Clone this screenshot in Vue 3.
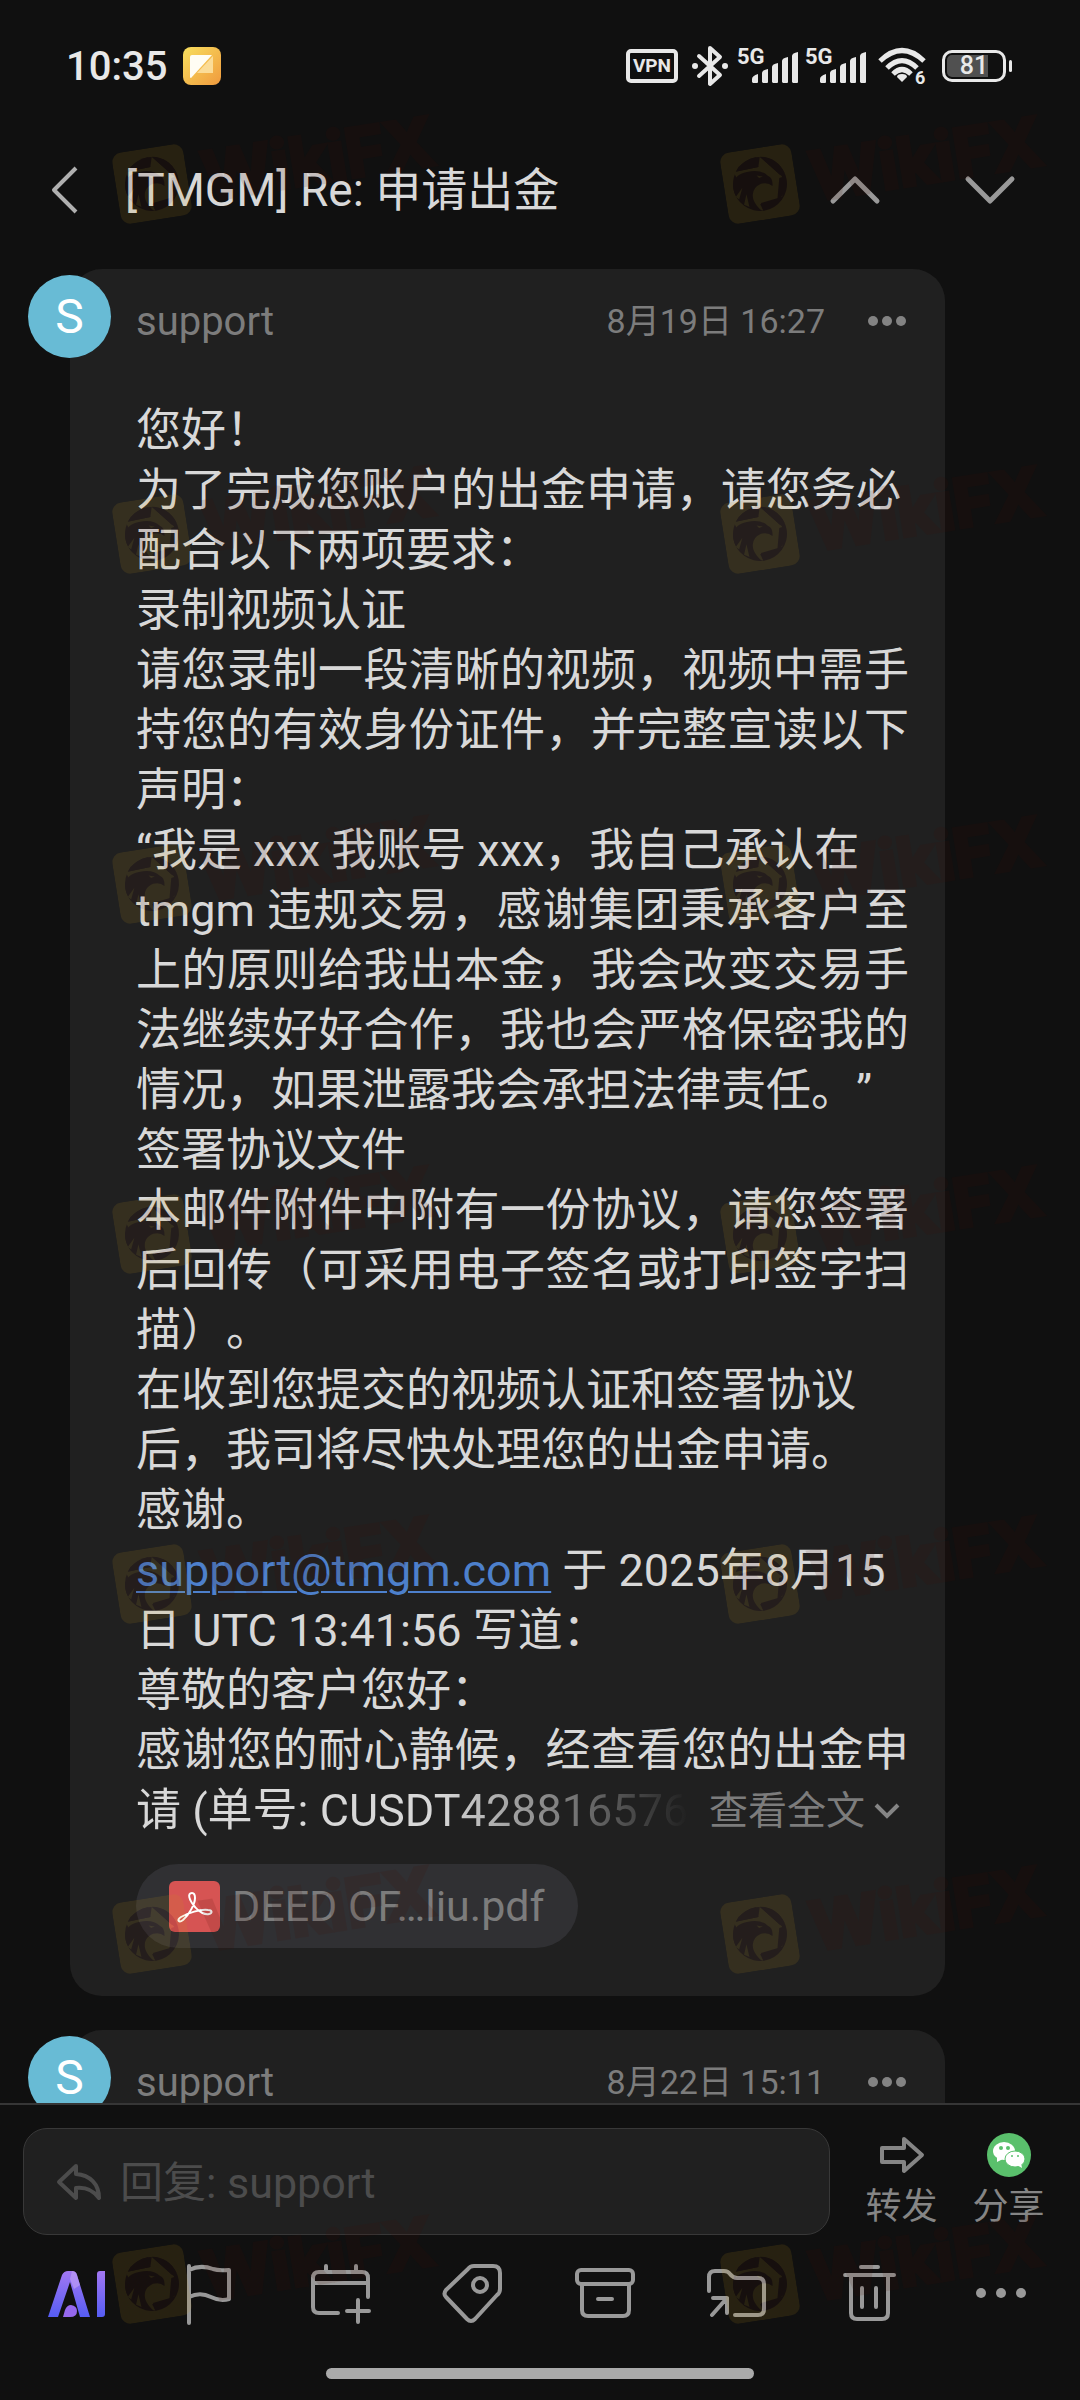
<script setup>
import { ref } from 'vue'

const reply = ref('')

const lines = [
  { text: '您好！' },
  { text: '为了完成您账户的出金申请，请您务必' },
  { text: '配合以下两项要求：' },
  { text: '录制视频认证' },
  { text: '请您录制一段清晰的视频，视频中需手', full: true },
  { text: '持您的有效身份证件，并完整宣读以下', full: true },
  { text: '声明：' },
  { text: '“我是 xxx 我账号 xxx，我自己承认在' },
  { text: 'tmgm 违规交易，感谢集团秉承客户至', full: true },
  { text: '上的原则给我出本金，我会改变交易手', full: true },
  { text: '法继续好好合作，我也会严格保密我的', full: true },
  { text: '情况，如果泄露我会承担法律责任。”' },
  { text: '签署协议文件' },
  { text: '本邮件附件中附有一份协议，请您签署', full: true },
  { text: '后回传（可采用电子签名或打印签字扫', full: true },
  { text: '描）。' },
  { text: '在收到您提交的视频认证和签署协议' },
  { text: '后，我司将尽快处理您的出金申请。' },
  { text: '感谢。' },
  { link: 'support@tmgm.com', text: ' 于 2025年8月15' },
  { text: '日 UTC 13:41:56 写道：' },
  { text: '尊敬的客户您好：' },
  { text: '感谢您的耐心静候，经查看您的出金申', full: true },
]
</script>

<template>
  <div class="app">
    <div class="status">
      <span class="clock">10:35</span>
      <svg class="note" width="38" height="38" viewBox="0 0 38 38" aria-hidden="true">
        <defs>
          <linearGradient id="noteFill" x1="0" y1="0" x2="1" y2="1">
            <stop offset="0" stop-color="#f8df5e" />
            <stop offset="1" stop-color="#f09a3e" />
          </linearGradient>
        </defs>
        <rect width="38" height="38" rx="8" fill="url(#noteFill)" />
        <path d="M30 9v17H14z" fill="#fbdc98" />
        <path d="M7 10q0-2 2-2h20L8 31q-1 0-1-1z" fill="#fffdf4" />
      </svg>
      <div class="signals">
        <span class="vpn">VPN</span>
        <svg width="40" height="42" viewBox="0 0 40 42" fill="none" stroke="#e8e8e8" stroke-width="4" stroke-linejoin="round" stroke-linecap="round" aria-hidden="true">
          <path d="M9 11l21 19-10 9V3l10 9L9 31" />
          <circle cx="5" cy="21" r="3" fill="#e8e8e8" stroke="none" />
          <circle cx="35" cy="21" r="3" fill="#e8e8e8" stroke="none" />
        </svg>
        <span v-for="n in 2" :key="n" class="cell">
          <span class="gen">5G</span>
          <svg width="46" height="31" viewBox="0 0 46 31" fill="#e8e8e8" aria-hidden="true">
            <path d="M0 30v-3q0-3 6-5v8q0 1-1 1H1zM10 30V21q0-3 6-4v13q0 1-1 1h-4zM20 30V15q0-3 6-4v19q0 1-1 1h-4zM30 30V9q0-3 6-4v25q0 1-1 1h-4zM40 30V4q0-3 6-4v30q0 1-1 1h-4z" />
          </svg>
        </span>
        <svg class="wifi" width="50" height="46" viewBox="0 0 50 46" fill="none" stroke="#e8e8e8" stroke-width="5" aria-hidden="true">
          <path d="M2 15Q24-6 46 15M9 22Q24 7 39 22M15 28Q24 19 33 28" />
          <path d="M24 28q-5 0-5 3l5 5 5-5q0-3-5-3z" fill="#e8e8e8" stroke="none" />
          <text x="37" y="38" font-size="18" font-weight="700" fill="#e8e8e8" stroke="#101010" stroke-width="4" paint-order="stroke">6</text>
        </svg>
        <span class="battery"><span class="level">81</span></span>
      </div>
    </div>

    <header class="titlebar">
      <button class="back" type="button" aria-label="返回">
        <svg width="60" height="60" viewBox="0 0 60 60" fill="none" stroke="#b0b0b0" stroke-width="4" stroke-linejoin="round"><path d="M41 8L19 30l22 22" /></svg>
      </button>
      <h1>[TMGM] Re: 申请出金</h1>
      <button class="step" type="button" aria-label="上一封">
        <svg width="60" height="60" viewBox="0 0 60 60" fill="none" stroke="#999" stroke-width="5" stroke-linecap="round" stroke-linejoin="round"><path d="M8 41l22-22 22 22" /></svg>
      </button>
      <button class="step" type="button" aria-label="下一封">
        <svg width="60" height="60" viewBox="0 0 60 60" fill="none" stroke="#999" stroke-width="5" stroke-linecap="round" stroke-linejoin="round"><path d="M8 19l22 22 22-22" /></svg>
      </button>
    </header>

    <main class="thread">
      <article class="card">
        <span class="avatar">S</span>
        <div class="meta">
          <span class="from">support</span>
          <time>8月19日 16:27</time>
          <button class="more" type="button" aria-label="更多">
            <svg width="38" height="10" viewBox="0 0 38 10" fill="#838383"><circle cx="5" cy="5" r="5" /><circle cx="19" cy="5" r="5" /><circle cx="33" cy="5" r="5" /></svg>
          </button>
        </div>
        <div class="body">
          <p v-for="(l, i) in lines" :key="i" :class="{ full: l.full }"><a v-if="l.link" href="mailto:support@tmgm.com">{{ l.link }}</a>{{ l.text }}</p>
          <div class="last">
            <p class="fade">请 (单号: CUSDT428816576</p>
            <button class="expand" type="button">
              查看全文
              <svg width="28" height="20" viewBox="0 0 28 20" fill="none" stroke="#858585" stroke-width="4"><path d="M3 4l11 11L25 4" /></svg>
            </button>
          </div>
        </div>
        <a class="file" href="#">
          <svg width="51" height="51" viewBox="0 0 51 51" aria-hidden="true">
            <rect width="51" height="51" rx="6" fill="#d65453" />
            <path d="M23 12c-5 0-3 7 3 14 4 5 10 8 14 7 4-1 3-4-1-4-8-1-20 3-27 7-5 3-2 6 2 3 6-5 12-16 12-22 0-3-1-5-3-5z" fill="none" stroke="#fff" stroke-width="2" />
          </svg>
          <span>DEED OF…liu.pdf</span>
        </a>
      </article>

      <article class="card">
        <span class="avatar">S</span>
        <div class="meta">
          <span class="from">support</span>
          <time>8月22日 15:11</time>
          <button class="more" type="button" aria-label="更多">
            <svg width="38" height="10" viewBox="0 0 38 10" fill="#838383"><circle cx="5" cy="5" r="5" /><circle cx="19" cy="5" r="5" /><circle cx="33" cy="5" r="5" /></svg>
          </button>
        </div>
      </article>
    </main>

    <footer class="dock">
      <div class="actions">
        <label class="reply">
          <svg width="46" height="40" viewBox="0 0 46 40" fill="none" stroke="#4c4c4c" stroke-width="4" stroke-linejoin="round" aria-hidden="true">
            <path d="M20 4L3 20l17 16V26c9-1 17 2 23 10C43 22 34 13 20 12z" />
          </svg>
          <input v-model="reply" type="text" placeholder="回复: support" aria-label="回复" />
        </label>
        <button class="act" type="button">
          <svg width="48" height="48" viewBox="0 0 48 48" fill="none" stroke="#858585" stroke-width="4" stroke-linejoin="round">
            <path d="M4 17h22V8l18 16-18 16V31H4z" />
          </svg>
          转发
        </button>
        <button class="act" type="button">
          <svg width="48" height="48" viewBox="0 0 48 48">
            <circle cx="24" cy="24" r="22" fill="#5ac06c" />
            <ellipse cx="19" cy="20" rx="11" ry="9" fill="#fff" />
            <path d="M12 26l0 5 6-3z" fill="#fff" />
            <ellipse cx="30" cy="28" rx="10" ry="8" fill="#fff" stroke="#5ac06c" />
            <path d="M32 34l5 3-1-5z" fill="#fff" />
            <g fill="#5ac06c"><circle cx="16" cy="17" r="2" /><circle cx="23" cy="17" r="2" /><circle cx="27" cy="25" r="1" /><circle cx="33" cy="25" r="1" /></g>
          </svg>
          分享
        </button>
      </div>

      <nav class="tools">
        <button type="button" aria-label="AI">
          <svg width="72" height="72" viewBox="0 0 72 72">
            <defs>
              <linearGradient id="aiFill" gradientUnits="userSpaceOnUse" x1="0" y1="14" x2="0" y2="62">
                <stop offset="0" stop-color="#a478f2" />
                <stop offset="1" stop-color="#545cf4" />
              </linearGradient>
            </defs>
            <path d="M7 61L21 19q2-4 6-4h4q4 0 5 4L49 61H39L29 26 17 61z" fill="url(#aiFill)" />
            <path d="M31 15q4 0 5 4l3 10-6 4-4-10z" fill="#c3a3f8" opacity=".6" />
            <path d="M56 18q0-3 3-3h5v43q0 3-3 3h-5z" fill="url(#aiFill)" />
            <path d="M22 61l2-7q2-5 6-5 6 1 6 6 0 6-7 6z" fill="#9668ee" />
          </svg>
        </button>
        <button type="button" aria-label="标记">
          <svg width="72" height="72" viewBox="0 0 72 72"><path d="M16 67V10M16 14c8-4 16-4 24-1 6 2 10 1 16 1v29c-6 2-12 1-18-2-8-4-16-3-22 0" /></svg>
        </button>
        <button type="button" aria-label="日程">
          <svg width="72" height="72" viewBox="0 0 72 72"><path d="M33 57H14q-6 0-6-6V22q0-6 6-6h43q6 0 6 6v19M8 27h55M21 10v6M51 10v6M53 44v22M42 55h22" /></svg>
        </button>
        <button type="button" aria-label="标签">
          <svg width="72" height="72" viewBox="0 0 72 72"><path d="M37 10H56Q63 10 63 17V33Q63 37 60 39L38 63Q34 67 30 63L9 41Q6 38 9 34L31 13Q33 10 37 10Z" /><circle cx="43" cy="29" r="7" /></svg>
        </button>
        <button type="button" aria-label="归档">
          <svg width="72" height="72" viewBox="0 0 72 72"><rect x="8" y="14" width="56" height="14" rx="4" /><path d="M13 28v26q0 6 6 6h35q6 0 6-6V28M29 43h14" /></svg>
        </button>
        <button type="button" aria-label="移动">
          <svg width="72" height="72" viewBox="0 0 72 72"><path d="M8 35V21q0-6 6-6h9q4 0 6 3 3 4 7 4h21q6 0 6 6v25q0 6-6 6H34M12 42h14v15M26 42L11 59" /></svg>
        </button>
        <button type="button" aria-label="删除">
          <svg width="72" height="72" viewBox="0 0 72 72"><path d="M28 11h17M12 19h49M18 19v38q0 6 6 6h25q6 0 6-6V19M29 32v19M43 32v19" /></svg>
        </button>
        <button type="button" aria-label="更多操作">
          <svg width="72" height="72" viewBox="0 0 72 72" class="dots"><circle cx="16" cy="37" r="5" /><circle cx="36" cy="37" r="5" /><circle cx="56" cy="37" r="5" /></svg>
        </button>
      </nav>
      <div class="home"></div>
    </footer>

    <div class="marks" aria-hidden="true">
      <div v-for="r in 7" :key="r" class="marks-row">
        <div v-for="c in 2" :key="c" class="mark">
          <svg width="72" height="72" viewBox="0 0 72 72">
            <rect width="72" height="72" rx="10" fill="#c89818" />
            <circle cx="36" cy="36" r="27" fill="#420a00" />
            <path d="M12 20l25-1 3-10 19 23-3 20-22 3 1 8-9-4-14-38z" fill="#c89818" />
            <path d="M40 9q17 3 22 20l-5 1zM37 19L14 20q7-10 22-11zM62 32q1 15-12 25l6-24zM35 62l-2-6 22-3q-8 9-20 9z" fill="#420a00" />
            <path d="M9 34q3-12 16-12 14-1 20 7 5 3 3 11-4-5-11-4-11 3-10 14 1 6 6 12-8-1-12-5Q8 49 9 34z" fill="#420a00" />
            <path d="M34 27l6 2-4 1zM10 45l8-8-5 11zM17 54l4-10 1 13z" fill="#c89818" />
          </svg>
          <span>WikiFX</span>
        </div>
      </div>
    </div>
  </div>
</template>

<style>
body {
  margin: 0;
  background: #101010;
}
</style>

<style scoped>
.app {
  position: relative;
  display: flex;
  flex-direction: column;
  height: 100vh;
  overflow: hidden;
  background: #101010;
  color: #d8d8d8;
  font-family: Roboto, "Noto Sans CJK SC", sans-serif;
  text-spacing-trim: space-all;
}

button {
  display: flex;
  align-items: center;
  justify-content: center;
  margin: 0;
  padding: 0;
  border: 0;
  background: none;
  color: inherit;
  font: inherit;
}

svg {
  display: block;
  flex: none;
}

.status {
  display: flex;
  align-items: center;
  height: 132px;
  padding: 0 74px 0 66px;
  color: #e8e8e8;
}

.clock {
  font-size: 40px;
  font-weight: 500;
}

.note {
  margin-left: 16px;
}

.signals {
  display: flex;
  align-items: center;
  margin-left: auto;
}

.vpn {
  box-sizing: border-box;
  width: 52px;
  margin-right: 12px;
  border: 4px solid #e8e8e8;
  border-radius: 5px;
  font-size: 19px;
  font-weight: 700;
  line-height: 26px;
  text-align: center;
}

.cell {
  display: flex;
  width: 61px;
  height: 34px;
  margin-left: 7px;
  position: relative;
  align-items: flex-end;
  justify-content: flex-end;
}

.gen {
  position: absolute;
  top: -2px;
  left: 0;
  font-size: 22px;
  font-weight: 700;
  line-height: 20px;
}

.wifi {
  margin: 6px 0 0 12px;
}

.battery {
  position: relative;
  box-sizing: border-box;
  width: 64px;
  height: 32px;
  margin-left: 14px;
  padding: 2px;
  border: 3px solid #e8e8e8;
  border-radius: 10px;
}

.battery::after {
  content: "";
  position: absolute;
  top: 7px;
  right: -9px;
  width: 3px;
  height: 12px;
  border-radius: 2px;
  background: #e8e8e8;
}

.level {
  display: block;
  border-radius: 5px;
  background: linear-gradient(90deg, #505050 76%, transparent 76%);
  font-size: 25px;
  font-weight: 500;
  line-height: 22px;
  text-align: center;
}

.titlebar {
  display: flex;
  align-items: center;
  height: 116px;
  margin-bottom: 21px;
  padding: 0 23px 0 35px;
}

.titlebar h1 {
  flex: 1;
  margin: 0 0 0 30px;
  font-size: 46px;
  font-weight: 400;
  line-height: 60px;
}

.step {
  width: 135px;
}

.thread {
  flex: 1;
  min-height: 0;
  overflow: hidden;
}

.card {
  position: relative;
  margin: 0 135px 34px 70px;
  padding: 27px 36px 48px 66px;
  border-radius: 32px;
  background: #202020;
}

.avatar {
  position: absolute;
  top: 6px;
  left: -42px;
  width: 83px;
  height: 83px;
  border-radius: 50%;
  background: #68bbd5;
  color: #fff;
  font-size: 48px;
  line-height: 83px;
  text-align: center;
}

.meta {
  display: flex;
  align-items: center;
  height: 50px;
  margin-bottom: 55px;
  padding-right: 3px;
  color: #7c7c7c;
  font-size: 40px;
}

.meta time {
  margin-left: auto;
  font-size: 34px;
  line-height: 46px;
}

.more {
  margin-left: 43px;
}

.body p {
  margin: 0;
  font-size: 45px;
  line-height: 60px;
  white-space: pre;
}

.body .full {
  white-space: normal;
  text-align-last: justify;
}

.body a {
  color: #4d80cc;
  text-decoration-thickness: 2px;
  text-underline-offset: 5px;
}

.last {
  display: flex;
  align-items: center;
  justify-content: space-between;
  padding-right: 8px;
}

.body .fade {
  background: linear-gradient(90deg, #d8d8d8 55%, #202020 100%);
  background-clip: text;
  color: transparent;
}

.expand {
  gap: 8px;
  color: #7c7c7c;
  font-size: 39px;
  line-height: 60px;
}

.file {
  display: inline-flex;
  align-items: center;
  gap: 12px;
  height: 84px;
  margin-top: 23px;
  padding: 0 33px;
  border-radius: 42px;
  background: #303033;
  color: #7c7c7c;
  font-size: 43px;
  text-decoration: none;
  vertical-align: top;
}

.dock {
  padding: 23px 0 21px;
  border-top: 2px solid #363636;
}

.actions {
  display: flex;
  padding: 0 18px 0 23px;
}

.reply {
  display: flex;
  flex: 1;
  align-items: center;
  box-sizing: border-box;
  height: 107px;
  margin-right: 18px;
  padding: 0 32px;
  gap: 18px;
  border: 1px solid #383838;
  border-radius: 24px;
  background: #202020;
}

.reply input {
  flex: 1;
  min-width: 0;
  padding: 2px 0 0;
  border: 0;
  outline: 0;
  background: none;
  color: #d8d8d8;
  font: inherit;
  font-size: 43px;
}

.reply input::placeholder {
  color: #4c4c4c;
  opacity: 1;
}

.act {
  flex-direction: column;
  justify-content: flex-start;
  gap: 6px;
  width: 107px;
  padding-top: 3px;
  color: #858585;
  font-size: 36px;
  line-height: 44px;
}

.tools {
  display: flex;
  margin-top: 21px;
  padding: 0 13px 0 11px;
}

.tools button {
  flex: 1;
}

.tools svg {
  fill: none;
  stroke: #999;
  stroke-width: 4px;
  stroke-linecap: round;
  stroke-linejoin: round;
}

.tools button:first-child svg {
  stroke: none;
}

.tools .dots {
  fill: #999;
  stroke: none;
}

.home {
  width: 428px;
  height: 11px;
  margin: 40px auto 0;
  border-radius: 6px;
  background: #aaa;
}

.marks {
  position: absolute;
  inset: 0;
  overflow: hidden;
  padding: 148px 0 0 116px;
  opacity: 0.12;
  pointer-events: none;
}

.marks-row {
  display: flex;
  height: 350px;
}

.mark {
  display: flex;
  flex: none;
  align-items: center;
  gap: 15px;
  width: 608px;
  height: 72px;
  transform: rotate(-9deg);
  transform-origin: 36px 36px;
}

.mark span {
  color: #420a00;
  font-family: Inter, sans-serif;
  font-size: 67px;
  font-weight: 700;
  -webkit-text-stroke: 4px #420a00;
}
</style>
